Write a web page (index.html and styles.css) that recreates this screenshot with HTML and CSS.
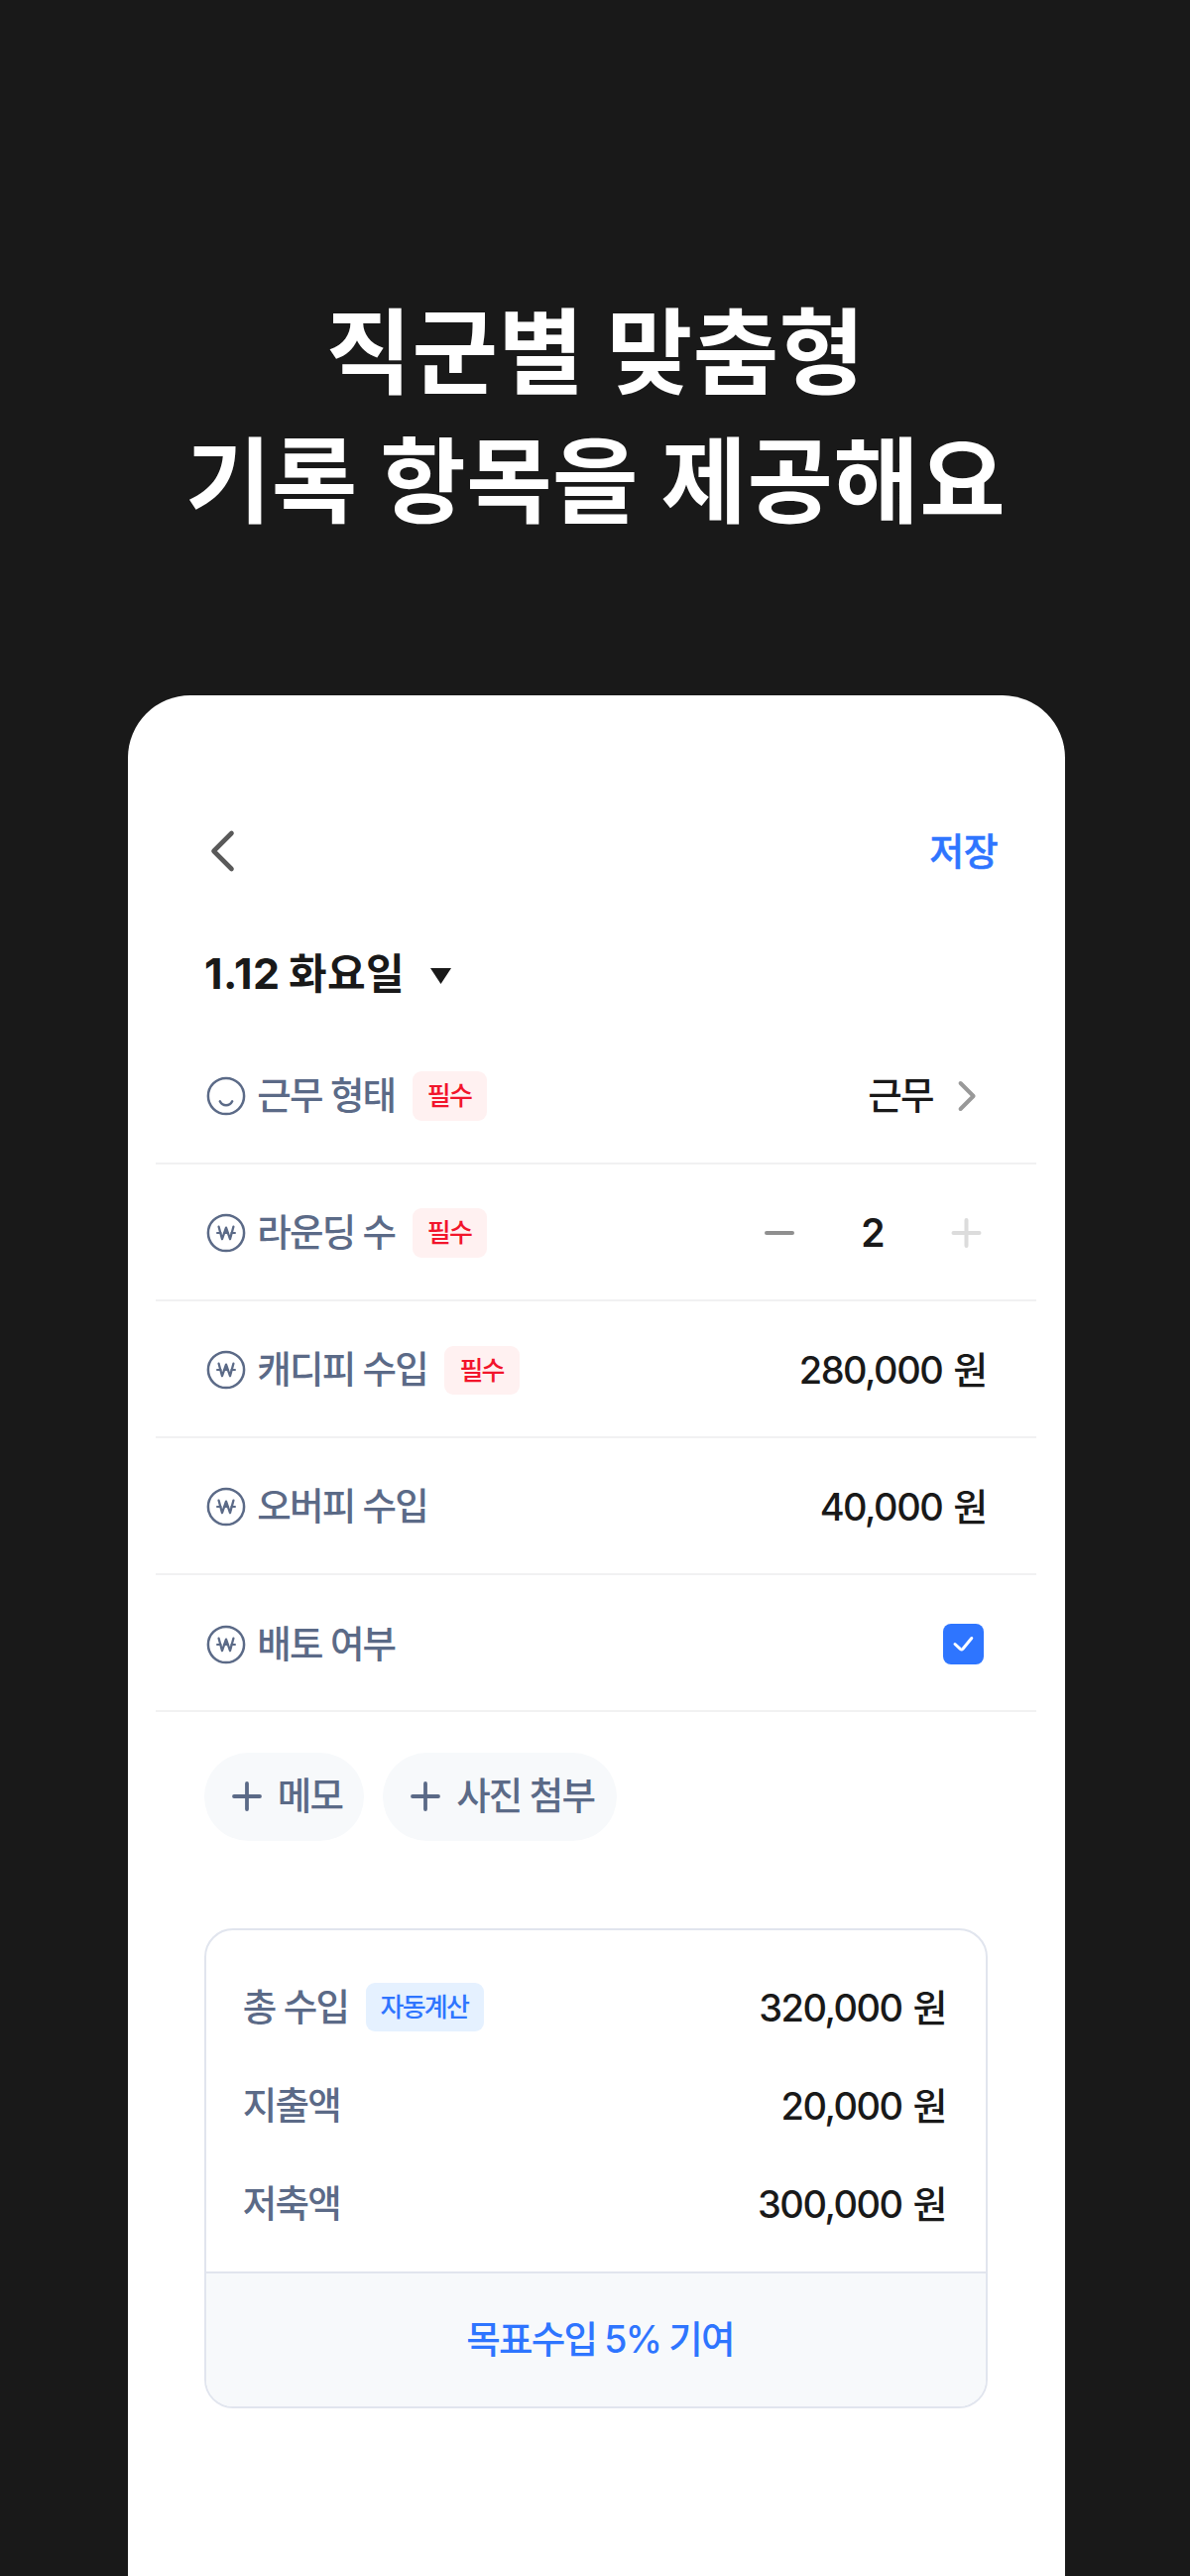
FILE: index.html
```html
<!DOCTYPE html>
<html lang="ko">
<head>
<meta charset="utf-8">
<title>직군별 맞춤형 기록 항목</title>
<link rel="stylesheet" href="styles.css">
</head>
<body>
<svg class="defs" aria-hidden="true">
  <symbol id="won" viewBox="0 0 42 42">
    <circle cx="21" cy="21" r="18.1" stroke-width="2.5"/>
    <path d="M13.6 14.7 17 27.2 21 15.6 25 27.2 28.4 14.7" stroke-width="2.3"/>
    <path d="M12 21H15.6M19.4 21H22.6M26.4 21H30" stroke-width="2"/>
  </symbol>
  <symbol id="plus" viewBox="0 0 32 32">
    <path d="M16 3V29M3 16H29" stroke-width="3.8"/>
  </symbol>
</svg>

<h1 class="headline">직군별 맞춤형<br>기록 항목을 제공해요</h1>

<main class="screen">
  <header class="topbar">
    <svg class="back" viewBox="0 0 40 44"><path d="M27.5 4 9.5 22 27.5 40"/></svg>
    <span class="save">저장</span>
  </header>

  <div class="date">
    <span class="date-text"><span class="date-num">1.12</span> 화요일</span>
    <svg class="caret" viewBox="0 0 21 16"><path d="M0 0H21L10.5 16Z"/></svg>
  </div>

  <section class="fields">
    <div class="row">
      <svg class="icon" viewBox="0 0 42 42"><circle cx="21" cy="21" r="18.1" stroke-width="2.5"/><path d="M14.8 26.3Q16.8 30.3 21 30.3T27.2 26.3" stroke-width="2.5"/></svg>
      <span class="label">근무 형태</span><span class="badge">필수</span>
      <span class="value">근무</span>
      <svg class="chevron" viewBox="0 0 40 40"><path d="M13.6 7 26.6 20 13.6 33"/></svg>
    </div>
    <div class="row">
      <svg class="icon"><use href="#won"/></svg>
      <span class="label">라운딩 수</span><span class="badge">필수</span>
      <div class="stepper">
        <svg class="minus" viewBox="0 0 40 40"><path d="M7 20H33"/></svg>
        <span class="count">2</span>
        <svg class="more" viewBox="0 0 40 40"><path d="M6.5 20H32.5M19.5 7V33"/></svg>
      </div>
    </div>
    <div class="row">
      <svg class="icon"><use href="#won"/></svg>
      <span class="label">캐디피 수입</span><span class="badge">필수</span>
      <span class="amount">280,000 원</span>
    </div>
    <div class="row">
      <svg class="icon"><use href="#won"/></svg>
      <span class="label">오버피 수입</span>
      <span class="amount">40,000 원</span>
    </div>
    <div class="row">
      <svg class="icon"><use href="#won"/></svg>
      <span class="label">배토 여부</span>
      <span class="check"><svg viewBox="0 0 41 41"><path d="M12 20.5 17.3 25.4Q18.7 26.6 20 25.3L28.8 14.5"/></svg></span>
    </div>
  </section>

  <div class="pills">
    <span class="pill"><svg><use href="#plus"/></svg>메모</span>
    <span class="pill"><svg><use href="#plus"/></svg>사진 첨부</span>
  </div>

  <section class="card">
    <div class="sums">
      <div class="sum"><span class="label">총 수입</span><span class="badge auto">자동계산</span><span class="amount">320,000 원</span></div>
      <div class="sum"><span class="label">지출액</span><span class="amount">20,000 원</span></div>
      <div class="sum"><span class="label">저축액</span><span class="amount">300,000 원</span></div>
    </div>
    <div class="goal">목표수입 5% 기여</div>
  </section>
</main>
</body>
</html>
```
FILE: styles.css
```css
* { box-sizing: border-box; }

body {
  margin: 0;
  width: 1200px;
  height: 2597px;
  overflow: hidden;
  display: flex;
  flex-direction: column;
  align-items: center;
  background: #191919;
  color: #191919;
  font-family: Inter, "Noto Sans CJK KR", sans-serif;
  font-size: 37.5px;
  font-weight: 500;
  line-height: 48px;
  letter-spacing: -1.8px;
  white-space: nowrap;
}

svg {
  display: block;
  flex: none;
  fill: none;
  stroke: currentColor;
  stroke-linecap: round;
  stroke-linejoin: round;
}

.defs { position: absolute; width: 0; height: 0; }

.headline {
  margin: 291px 0 0 1px;
  height: 410.3px;
  flex: none;
  color: #fff;
  font-size: 94px;
  font-weight: 700;
  line-height: 130px;
  letter-spacing: .4px;
  text-align: center;
}

.screen {
  flex: 1;
  width: 945px;
  margin-left: 2px;
  padding-top: 117px;
  background: #fff;
  border-radius: 63px 63px 0 0;
}

.topbar {
  display: flex;
  align-items: center;
  justify-content: space-between;
  height: 80px;
  padding: 0 67.5px 0 77.5px;
}

.back { width: 40px; height: 44px; color: #595959; stroke-width: 4.6; }

.save {
  color: #2e75ff;
  font-size: 38px;
  letter-spacing: -.6px;
  -webkit-text-stroke: .5px currentColor;
}

.date {
  display: flex;
  align-items: center;
  height: 60px;
  margin-top: 53.4px;
  padding-left: 77.5px;
  font-size: 42px;
  font-weight: 700;
}

.date-text { letter-spacing: .4px; word-spacing: -2px; }
.date-num { font-size: 43px; letter-spacing: .5px; }

.caret {
  width: 21px;
  height: 16px;
  margin: 4px 0 0 26px;
  fill: currentColor;
  stroke: none;
}

.fields { margin: 24px 28.5px 0 28px; }

.row {
  display: flex;
  align-items: center;
  height: 138.15px;
  padding: 2.6px 50.3px 0 50.6px;
  border-bottom: 2px solid #f1f1f2;
}

.icon { width: 42px; height: 42px; margin-right: 10.2px; color: #5b6a87; }
.label { color: #5b6a87; }

.badge {
  margin-left: 17.4px;
  padding: 0 16.1px 0 15.1px;
  border-radius: 9px;
  background: #fff1f1;
  color: #f2152b;
  font-size: 26px;
  line-height: 49.5px;
}

.badge.auto { background: #e5f1ff; color: #2e75ff; }

.value, .amount, .stepper, .check { margin-left: auto; }

.amount { font-size: 38px; letter-spacing: -1.5px; word-spacing: 2.4px; }

.chevron { width: 40px; height: 40px; margin-left: 14px; color: #999; stroke-width: 4; }

.stepper {
  display: flex;
  align-items: center;
  justify-content: space-between;
  width: 228.7px;
}

.stepper svg { width: 40px; height: 40px; stroke-width: 4; }
.minus { color: #8f8f8f; }
.more { color: #dcdcdc; }
.count { font-size: 39px; font-weight: 600; letter-spacing: 0; }

.check {
  width: 41px;
  height: 41px;
  margin-right: 2.7px;
  border-radius: 8px;
  background: #2e75ff;
  color: #fff;
}

.check svg { stroke-width: 3; }

.pills {
  display: flex;
  gap: 19px;
  margin: 40.5px 0 0 77.5px;
}

.pill {
  display: flex;
  align-items: center;
  gap: 15.2px;
  height: 89px;
  padding: 0 22.4px 0 26.5px;
  border-radius: 45px;
  background: #f7f9fb;
  color: #5b6a87;
}

.pill svg { width: 32px; height: 32px; }

.card {
  width: 790px;
  margin: 88px 0 0 77.5px;
  overflow: hidden;
  border: 2px solid #e1e5ee;
  border-radius: 29px;
}

.sums { padding: 28px 40px 18px 36.8px; }

.sum { display: flex; align-items: center; height: 99.4px; }

.goal {
  height: 136px;
  padding-left: 8px;
  border-top: 2px solid #e1e5ee;
  background: #f7f9fb;
  color: #2e75ff;
  line-height: 133px;
  text-align: center;
}
```
